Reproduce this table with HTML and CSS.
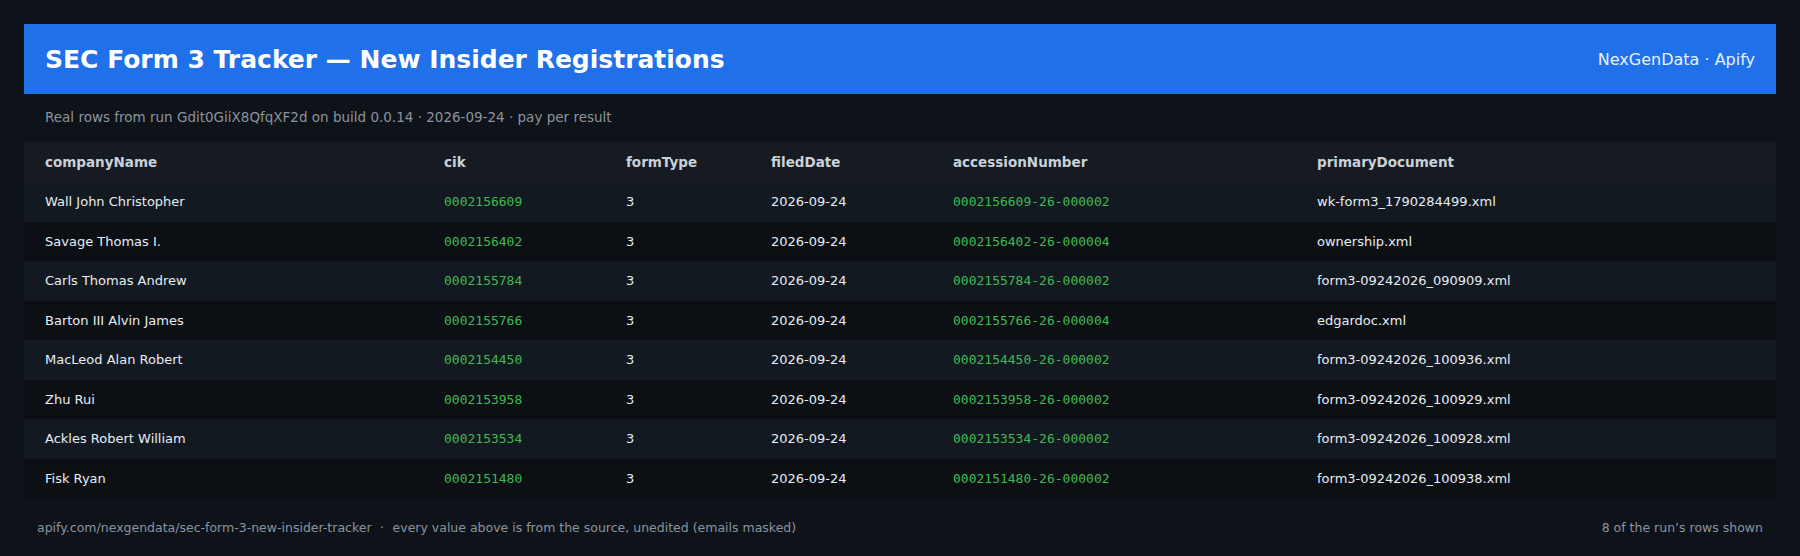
FILE: index.html
```html
<!DOCTYPE html>
<html lang="en">
<head>
<meta charset="utf-8">
<title>SEC Form 3 Tracker</title>
<link rel="stylesheet" href="styles.css">
</head>
<body>
<div class="page">
  <header class="banner">
    <h1 class="title">SEC Form 3 Tracker — New Insider Registrations</h1>
    <div class="brand">NexGenData · Apify</div>
  </header>
  <p class="subtitle">Real rows from run Gdit0GiiX8QfqXF2d on build 0.0.14 · 2026-09-24 · pay per result</p>
  <table class="grid">
    <colgroup>
      <col class="c-name"><col class="c-cik"><col class="c-type"><col class="c-date"><col class="c-acc"><col class="c-doc">
    </colgroup>
    <thead>
      <tr><th>companyName</th><th>cik</th><th>formType</th><th>filedDate</th><th>accessionNumber</th><th>primaryDocument</th></tr>
    </thead>
    <tbody>
      <tr><td>Wall John Christopher</td><td class="mono">0002156609</td><td>3</td><td>2026-09-24</td><td class="mono">0002156609-26-000002</td><td>wk-form3_1790284499.xml</td></tr>
      <tr><td>Savage Thomas I.</td><td class="mono">0002156402</td><td>3</td><td>2026-09-24</td><td class="mono">0002156402-26-000004</td><td>ownership.xml</td></tr>
      <tr><td>Carls Thomas Andrew</td><td class="mono">0002155784</td><td>3</td><td>2026-09-24</td><td class="mono">0002155784-26-000002</td><td>form3-09242026_090909.xml</td></tr>
      <tr><td>Barton III Alvin James</td><td class="mono">0002155766</td><td>3</td><td>2026-09-24</td><td class="mono">0002155766-26-000004</td><td>edgardoc.xml</td></tr>
      <tr><td>MacLeod Alan Robert</td><td class="mono">0002154450</td><td>3</td><td>2026-09-24</td><td class="mono">0002154450-26-000002</td><td>form3-09242026_100936.xml</td></tr>
      <tr><td>Zhu Rui</td><td class="mono">0002153958</td><td>3</td><td>2026-09-24</td><td class="mono">0002153958-26-000002</td><td>form3-09242026_100929.xml</td></tr>
      <tr><td>Ackles Robert William</td><td class="mono">0002153534</td><td>3</td><td>2026-09-24</td><td class="mono">0002153534-26-000002</td><td>form3-09242026_100928.xml</td></tr>
      <tr><td>Fisk Ryan</td><td class="mono">0002151480</td><td>3</td><td>2026-09-24</td><td class="mono">0002151480-26-000002</td><td>form3-09242026_100938.xml</td></tr>
    </tbody>
  </table>
  <footer class="foot">
    <span class="foot-left">apify.com/nexgendata/sec-form-3-new-insider-tracker<span class="sep">·</span>every value above is from the source, unedited (emails masked)</span>
    <span class="foot-right">8 of the run’s rows shown</span>
  </footer>
</div>
</body>
</html>
```

FILE: styles.css
```css
html, body {
  margin: 0;
  padding: 0;
  background: #0e131a;
}
body {
  font-family: "DejaVu Sans", "Liberation Sans", sans-serif;
  color: #e6edf3;
}
.page {
  padding: 24px 24px 0 24px;
}
.banner {
  display: flex;
  align-items: center;
  justify-content: space-between;
  height: 70px;
  padding: 0 21px;
  background: #1f70e9;
  box-sizing: border-box;
}
.title {
  margin: 0;
  font-size: 25px;
  font-weight: bold;
  color: #ffffff;
}
.brand {
  font-size: 16px;
  color: #e8f0ff;
}
.subtitle {
  margin: 0;
  padding: 14px 21px 0 21px;
  font-size: 13.5px;
  line-height: 18px;
  color: #8b949e;
}
.grid {
  width: 100%;
  margin-top: 16px;
  border-collapse: collapse;
  table-layout: fixed;
  font-size: 13px;
}
.c-name { width: 399px; }
.c-cik { width: 182px; }
.c-type { width: 145px; }
.c-date { width: 182px; }
.c-acc { width: 364px; }
.grid th {
  text-align: left;
  font-size: 13.5px;
  font-weight: bold;
  color: #c9d1d9;
  background: #161b22;
  padding: 11px 21px;
  line-height: 18px;
}
.grid td {
  padding: 11px 21px;
  font-size: 13px;
  line-height: 17.5px;
  white-space: nowrap;
}
.grid tbody tr:nth-child(odd) td {
  background: #131920;
}
.grid tbody tr:nth-child(even) td {
  background: #0c1015;
}
.grid td.mono {
  font-family: "DejaVu Sans Mono", "Liberation Mono", monospace;
  font-size: 13px;
  color: #3fb950;
}
.foot {
  display: flex;
  justify-content: space-between;
  padding: 22px 13px 0 13px;
  font-size: 12.5px;
  line-height: 16px;
  color: #8b949e;
}
.sep {
  margin: 0 8.5px;
}
```
